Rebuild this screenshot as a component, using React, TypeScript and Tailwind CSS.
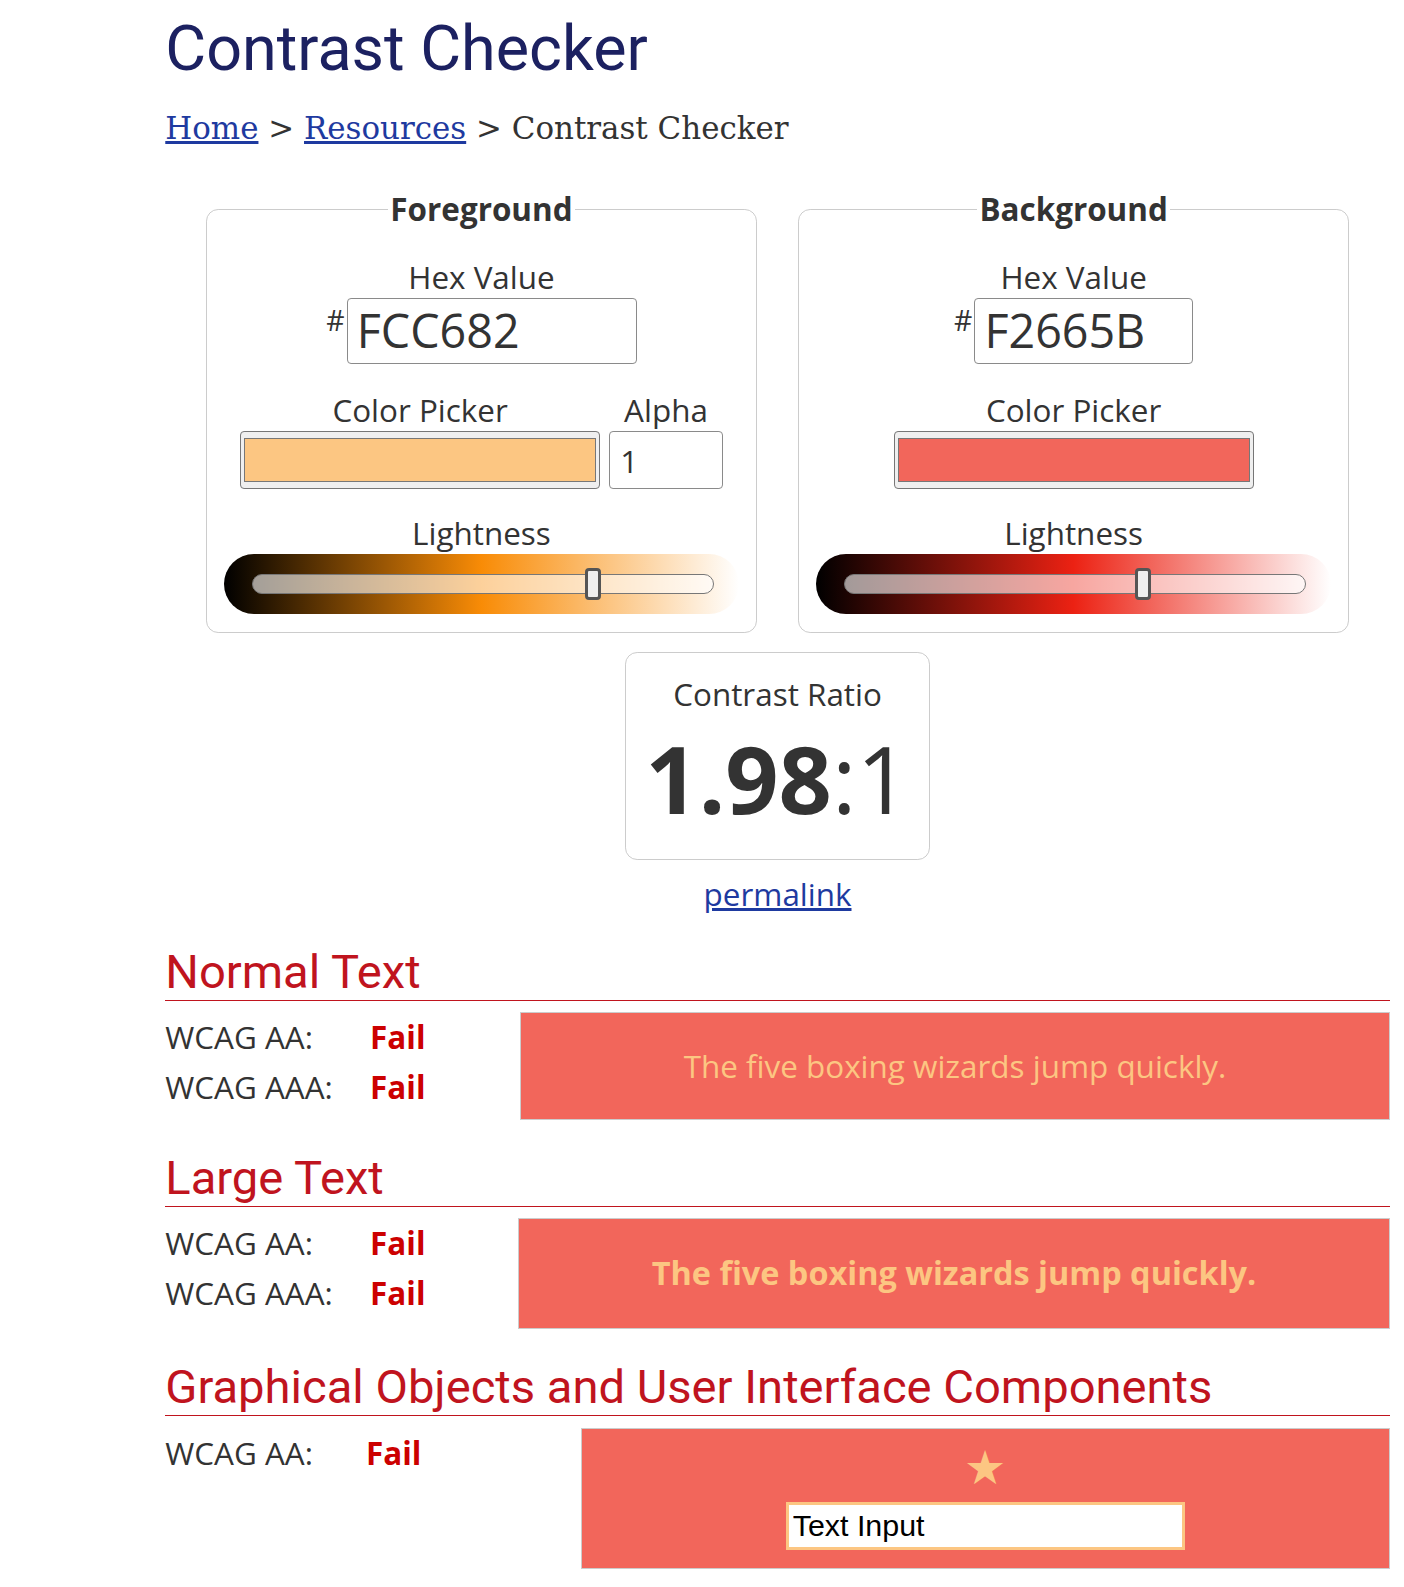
import React from "react"

type PanelData = {
  legend: string
  hex: string
  hexBox: string
  swatch: string
  alpha?: string
  lightness: number
  gradient: string
}

const panels: PanelData[] = [
  {
    legend: "Foreground",
    hex: "FCC682",
    hexBox: "w-[286px]",
    swatch: "bg-[#fcc682]",
    alpha: "1",
    lightness: 0.749,
    gradient: "bg-[linear-gradient(to_right,hsl(33,95%,0%),hsl(33,95%,50%),hsl(33,95%,100%))]",
  },
  {
    legend: "Background",
    hex: "F2665B",
    hexBox: "w-[216px]",
    swatch: "bg-[#f2665b]",
    lightness: 0.653,
    gradient: "bg-[linear-gradient(to_right,hsl(4,85%,0%),hsl(4,85%,50%),hsl(4,85%,100%))]",
  },
]

function ColorPanel({ p }: { p: PanelData }) {
  return (
    <fieldset className="w-[544px] rounded-[12px] border border-[#cccccc] px-[17px] pb-[18px]">
      <legend className="mx-auto px-[2px] text-[31px] leading-[42px] font-bold text-[#333]">{p.legend}</legend>

      <div className="mt-[25px] text-center leading-[42px]">Hex Value</div>
      <div className="flex justify-center items-start">
        <span className="mt-[4px] mr-[2px] text-[28px] leading-[34px]">#</span>
        <input
          defaultValue={p.hex}
          className={`${p.hexBox} h-[65px] rounded-[4px] border border-[#8a8a8a] pl-[9px] text-[46px] text-[#333] outline-none`}
        />
      </div>

      <div className="mt-[24px] flex justify-center gap-[9px]">
        <div className="flex flex-col items-center">
          <div className="leading-[42px]">Color Picker</div>
          <div className="w-[355px] h-[57px] rounded-[4px] border border-[#767676] bg-[#efefef] px-[3px] py-[6px]">
            <div className={`h-full w-full border border-[#777] ${p.swatch}`} />
          </div>
        </div>
        {p.alpha && (
          <div className="flex flex-col items-center">
            <div className="leading-[42px]">Alpha</div>
            <input
              defaultValue={p.alpha}
              className="w-[112px] h-[57px] rounded-[4px] border border-[#8a8a8a] pl-[10px] text-[31px] text-[#333] outline-none"
            />
          </div>
        )}
      </div>

      <div className="mt-[23px] text-center leading-[42px]">Lightness</div>
      <div className={`-mt-px h-[59px] rounded-full ${p.gradient} flex items-center pl-[28px] pr-[25px]`}>
        <div className="relative h-[20px] w-full rounded-full border border-[#777] bg-white/60">
          <div
            className="absolute top-[-7px] h-[32px] w-[16px] rounded-[4px] border-[3px] border-[#555] bg-[#efefef]"
            style={{ left: `calc(${p.lightness} * (100% - 16px))` }}
          />
        </div>
      </div>
    </fieldset>
  )
}

function Result({ label, first }: { label: string; first?: boolean }) {
  return (
    <div className="flex">
      <span className={first ? "w-[202px]" : "w-[198px]"}>{label}</span>
      <span className="font-bold text-[#cc0000]">Fail</span>
    </div>
  )
}

function SectionTitle({ children }: { children: React.ReactNode }) {
  return (
    <h2 className="font-['Roboto',sans-serif] text-[46.5px] leading-[54px] text-[#c0141e] border-b-[1.5px] border-b-[#c0141e]">
      {children}
    </h2>
  )
}

export default function App() {
  return (
    <div className="[zoom:1.014] overflow-hidden bg-white pl-[163px] pr-[14px] font-['Open_Sans',sans-serif] text-[31px] text-[#333]">
      <h1 className="pt-[11px] font-['Roboto',sans-serif] text-[62px] leading-[1.2] text-[#1c2161]">Contrast Checker</h1>

      <nav className="mt-[21px] font-['DejaVu_Serif',serif] text-[30.5px] leading-[40px] text-[#333]">
        <a href="#" className="text-[#1e3aa0] underline">Home</a> &gt;{" "}
        <a href="#" className="text-[#1e3aa0] underline">Resources</a> &gt; Contrast Checker
      </nav>

      <div className="mt-[39px] flex justify-center gap-[40px]">
        {panels.map((p) => (
          <ColorPanel key={p.legend} p={p} />
        ))}
      </div>

      <div className="mt-[19px] mx-auto w-[300px] h-[205px] rounded-[12px] border border-[#cccccc] flex flex-col items-center">
        <div className="mt-[19px] leading-[42px]">Contrast Ratio</div>
        <div className="mt-[2px] text-[92px] leading-[120px] text-[#333]">
          <span className="font-bold">1.98</span>:1
        </div>
      </div>
      <div className="mt-[13px] text-center leading-[42px]">
        <a href="#" className="text-[#1e3aa0] underline">permalink</a>
      </div>

      {/* Normal text */}
      <div className="mt-[29px]">
        <SectionTitle>Normal Text</SectionTitle>
      </div>
      <div className="mt-[11px] flex">
        <div className="w-[350px] leading-[49px]">
          <Result label="WCAG AA:" first />
          <Result label="WCAG AAA:" first />
        </div>
        <div className="flex-1 h-[106px] border border-[#cccccc] bg-[#f2665b] flex items-center justify-center text-[31px] text-[#fcc682]">
          The five boxing wizards jump quickly.
        </div>
      </div>

      {/* Large text */}
      <div className="mt-[31px]">
        <SectionTitle>Large Text</SectionTitle>
      </div>
      <div className="mt-[11px] flex">
        <div className="w-[348px] leading-[49px]">
          <Result label="WCAG AA:" first />
          <Result label="WCAG AAA:" first />
        </div>
        <div className="flex-1 h-[109px] border border-[#cccccc] bg-[#f2665b] flex items-center justify-center text-[32px] font-bold text-[#fcc682]">
          The five boxing wizards jump quickly.
        </div>
      </div>

      {/* Graphical objects */}
      <div className="mt-[31px]">
        <SectionTitle>Graphical Objects and User Interface Components</SectionTitle>
      </div>
      <div className="mt-[12px] flex">
        <div className="w-[410px] leading-[49px]">
          <Result label="WCAG AA:" />
        </div>
        <div className="flex-1 h-[139px] border border-[#cccccc] bg-[#f2665b] flex flex-col items-center">
          <span className="mt-[14px] text-[46px] leading-[46px] text-[#fcc682]">★</span>
          <input
            defaultValue="Text Input"
            className="mt-[12px] w-[394px] h-[47px] border-[3px] border-[#fcc682] bg-white px-[4px] font-['Liberation_Sans',sans-serif] text-[30px] text-black outline-none"
          />
        </div>
      </div>
    </div>
  )
}
